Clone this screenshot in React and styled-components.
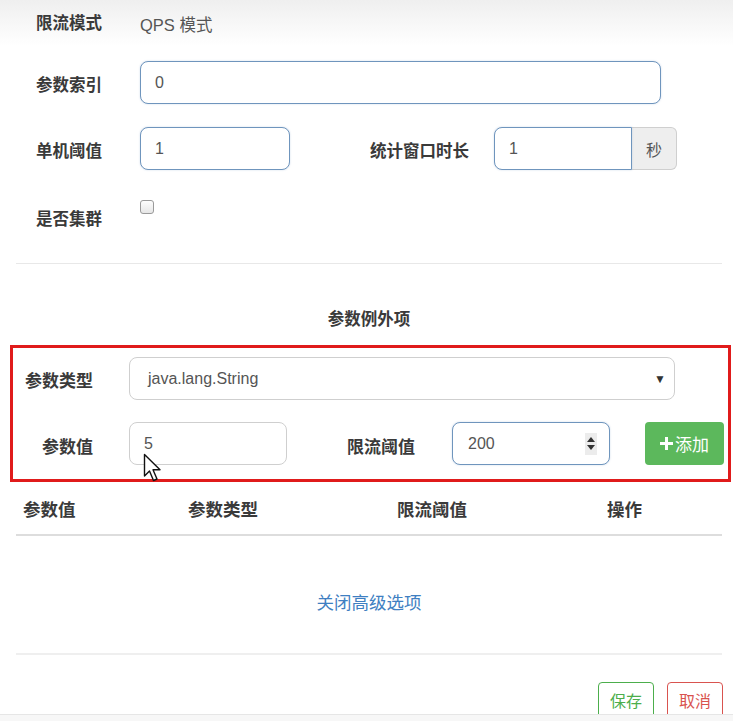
import React from "react";
import styled, { createGlobalStyle } from "styled-components";

const GlobalStyle = createGlobalStyle`
  * { box-sizing: border-box; }
  html, body {
    margin: 0;
    padding: 0;
    background: linear-gradient(#efefef 0px, #ffffff 46px) no-repeat #fff;
    font-family: "Liberation Sans", "Noto Sans CJK SC", sans-serif;
    color: #555;
  }
`;

const Page = styled.div`
  width: 733px;
  height: 721px;
  overflow: hidden;
`;

const Form = styled.div`
  padding-left: 36px;
`;

const Row = styled.div`
  display: flex;
  align-items: ${(p) => (p.$top ? "flex-start" : "center")};
  height: 43px;
  margin-top: ${(p) => p.$mt || 0}px;
`;

const Label = styled.div`
  flex-shrink: 0;
  width: ${(p) => p.$w || 104}px;
  height: 43px;
  margin-left: ${(p) => p.$ml || 0}px;
  padding-top: ${(p) => p.$dy || 0}px;
  line-height: ${(p) => 43 - (p.$dy || 0)}px;
  font-size: ${(p) => p.$fs || 16.5}px;
  font-weight: bold;
  color: #3a3a3a;
  text-align: ${(p) => (p.$right ? "right" : "left")};
  padding-right: ${(p) => p.$pr || 0}px;
  white-space: nowrap;
`;

const Static = styled.div`
  font-size: 16.5px;
  color: #555;
`;

const Input = styled.div`
  display: flex;
  align-items: center;
  position: relative;
  width: ${(p) => p.$w}px;
  height: 43px;
  padding-left: ${(p) => p.$pl || 14}px;
  border: 1.5px solid ${(p) => (p.$focus ? "#6f95bd" : "#cfcfcf")};
  border-radius: ${(p) => (p.$addon ? "8px 0 0 8px" : "8px")};
  background: #fff;
  font-size: 16px;
  color: #555;
  box-shadow: ${(p) => (p.$focus ? "0 0 2px rgba(102,140,190,0.35)" : "none")};
`;

const Addon = styled.div`
  display: flex;
  align-items: center;
  justify-content: center;
  width: 45px;
  height: 43px;
  background: #eeeeee;
  border: 1px solid #cfcfcf;
  border-left: none;
  border-radius: 0 6px 6px 0;
  font-size: 16px;
  color: #555;
`;

const Checkbox = styled.div`
  width: 14px;
  height: 14px;
  margin-top: 3px;
  border: 1px solid #9a9a9a;
  border-radius: 3px;
  background: linear-gradient(#fdfdfd, #e6e6e6);
`;

const Divider = styled.div`
  height: ${(p) => p.$h || 1}px;
  margin: ${(p) => p.$mt || 0}px 11px 0 16px;
  background: ${(p) => p.$c || "#e8e8e8"};
`;

const Title = styled.div`
  margin: 44px 11px 0 16px;
  line-height: 22px;
  text-align: center;
  font-size: 16.5px;
  font-weight: bold;
  color: #3a3a3a;
`;

const RedBox = styled.div`
  width: 721px;
  margin: 15px 0 0 10px;
  padding: 9px 0 14px 0;
  border: 3px solid #e01b1b;
`;

const Select = styled.div`
  display: flex;
  align-items: center;
  justify-content: space-between;
  width: 546px;
  height: 43px;
  padding: 0 8px 0 18px;
  border: 1px solid #cfcfcf;
  border-radius: 8px;
  font-size: 16px;
  color: #555;
`;

const Caret = styled.span`
  font-size: 12px;
  color: #333;
`;

const Spinner = styled.div`
  display: flex;
  flex-direction: column;
  align-items: center;
  justify-content: center;
  gap: 3px;
  width: 12px;
  height: 22px;
  margin: 0 12px 0 auto;
  background: #ececec;
`;

const Tri = styled.span`
  width: 0;
  height: 0;
  border-left: 4px solid transparent;
  border-right: 4px solid transparent;
  ${(p) => (p.$up ? "border-bottom: 5px solid #333;" : "border-top: 5px solid #333;")}
`;

const AddButton = styled.div`
  display: flex;
  align-items: center;
  justify-content: center;
  gap: 2px;
  width: 79px;
  height: 43px;
  margin-left: 35px;
  background: #5cb85c;
  border-radius: 4px;
  color: #fff;
  font-size: 17px;
`;

const Cursor = styled.svg`
  position: absolute;
  left: 13px;
  top: 30px;
`;

const TableHead = styled.div`
  display: grid;
  grid-template-columns: 165px 209px 210px 1fr;
  align-items: start;
  height: 46px;
  margin: 8px 11px 0 16px;
  padding: 8px 0 0 7px;
  border-bottom: 2px solid #dddddd;
  line-height: 24px;
  font-size: 17.5px;
  font-weight: bold;
  color: #3a3a3a;
`;

const Link = styled.div`
  margin: 55px 11px 0 16px;
  line-height: 24px;
  text-align: center;
  font-size: 17.5px;
  color: #3f7fc2;
`;

const Footer = styled.div`
  display: flex;
  justify-content: flex-end;
  align-items: flex-start;
  gap: 13px;
  height: 60px;
  padding: 27px 10px 0 0;
  overflow: hidden;
  border-bottom: 1px solid #e6e6e6;
`;

const OutlineButton = styled.div`
  display: flex;
  justify-content: center;
  flex-shrink: 0;
  width: 56px;
  height: 44px;
  padding-top: 8px;
  line-height: 22px;
  border: 1px solid ${(p) => p.$c};
  border-radius: 4px;
  color: ${(p) => p.$c};
  font-size: 16px;
  background: #fff;
`;

const Bottom = styled.div`
  height: 20px;
  background: #f7f7f7;
`;

export default function App() {
  return (
    <Page>
      <GlobalStyle />
      <Form>
        <Row $mt={2}>
          <Label>限流模式</Label>
          <Static>QPS 模式</Static>
        </Row>
        <Row $mt={16}>
          <Label $dy={6}>参数索引</Label>
          <Input $w={521} $focus>0</Input>
        </Row>
        <Row $mt={23}>
          <Label $dy={6}>单机阈值</Label>
          <Input $w={150} $focus>1</Input>
          <Label $ml={80} $w={124} $dy={6}>统计窗口时长</Label>
          <Input $w={138} $focus $addon>1</Input>
          <Addon>秒</Addon>
        </Row>
        <Row $mt={27} $top>
          <Label $dy={2}>是否集群</Label>
          <Checkbox />
        </Row>
      </Form>

      <Divider $mt={23} />

      <Title>参数例外项</Title>

      <RedBox>
        <Row>
          <Label $w={116} $pr={36} $dy={6} $fs={17} $right>参数类型</Label>
          <Select>
            java.lang.String
            <Caret>▼</Caret>
          </Select>
        </Row>
        <Row $mt={22}>
          <Label $w={116} $pr={36} $dy={8} $fs={17} $right>参数值</Label>
          <Input $w={158} $pl={14}>
            5
            <Cursor width="20" height="30" viewBox="0 0 20 30">
              <path
                d="M1.5 1.5 L1.5 23 L6.5 18 L10.5 27.5 L14 26 L10 16.8 L17 16.8 Z"
                fill="#fff"
                stroke="#111"
                strokeWidth="1.4"
                strokeLinejoin="round"
              />
            </Cursor>
          </Input>
          <Label $ml={60} $w={105} $dy={8} $fs={17}>限流阈值</Label>
          <Input $w={158} $pl={15} $focus>
            200
            <Spinner>
              <Tri $up />
              <Tri />
            </Spinner>
          </Input>
          <AddButton>
            <svg width="13" height="13" viewBox="0 0 13 13">
              <path d="M5 0h3v5h5v3H8v5H5V8H0V5h5z" fill="#fff" />
            </svg>
            添加
          </AddButton>
        </Row>
      </RedBox>

      <TableHead>
        <span>参数值</span>
        <span>参数类型</span>
        <span>限流阈值</span>
        <span>操作</span>
      </TableHead>

      <Link>关闭高级选项</Link>

      <Divider $mt={38} $h={2} $c="#efefef" />

      <Footer>
        <OutlineButton $c="#4cae4c">保存</OutlineButton>
        <OutlineButton $c="#d9534f">取消</OutlineButton>
      </Footer>
      <Bottom />
    </Page>
  );
}
